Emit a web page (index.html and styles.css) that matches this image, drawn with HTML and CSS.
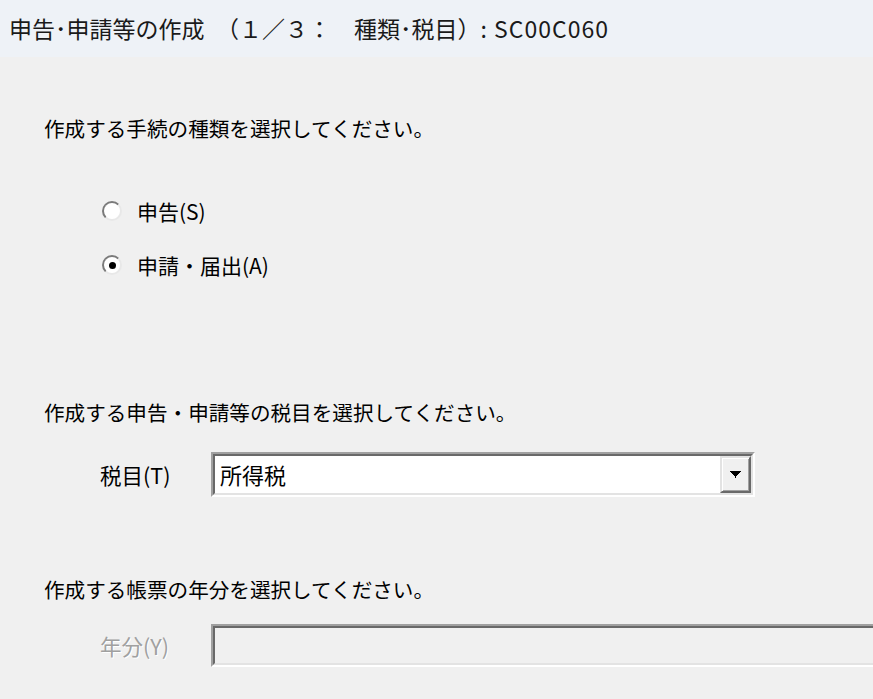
FILE: index.html
```html
<!DOCTYPE html>
<html lang="ja">
<head>
  <meta charset="UTF-8" />
  <title>申告・申請等の作成</title>
  <link rel="stylesheet" href="styles.css">
</head>
<body>

  <!-- Window title -->
  <div class="titlebar">申告･申請等の作成　（１／３：　種類･税目）<span class="screen-id">: SC00C060</span></div>

  <main class="content">

    <!-- Step 1: kind of procedure -->
    <p class="prompt">作成する手続の種類を選択してください。</p>
    <div class="radios">
      <label class="radio">
        <span class="radio-mark"></span>
        <span class="radio-text">申告(S)</span>
      </label>
      <label class="radio checked">
        <span class="radio-mark"></span>
        <span class="radio-text">申請・届出(A)</span>
      </label>
    </div>

    <!-- Step 2: tax item -->
    <p class="prompt prompt-tax">作成する申告・申請等の税目を選択してください。</p>
    <div class="field-row">
      <span class="field-label">税目(T)</span>
      <div class="combo">
        <div class="combo-inner">
          <span class="combo-value">所得税</span>
          <span class="combo-button">
            <svg width="11" height="7" viewBox="0 0 11 7" shape-rendering="crispEdges">
              <polygon points="0,0 11,0 5.5,6" fill="#000"/>
              <rect x="5" y="5" width="1" height="2" fill="#000"/>
            </svg>
          </span>
        </div>
      </div>
    </div>

    <!-- Step 3: year (disabled) -->
    <p class="prompt prompt-year">作成する帳票の年分を選択してください。</p>
    <div class="field-row field-row-year">
      <span class="field-label disabled">年分(Y)</span>
      <div class="combo combo-disabled">
        <div class="combo-inner"></div>
      </div>
    </div>

  </main>

</body>
</html>
```

FILE: styles.css
```css
* {
  margin: 0;
  padding: 0;
  box-sizing: border-box;
}

body {
  font-family: "Noto Sans CJK JP", "Noto Sans", sans-serif;
  background-color: #f0f0f0;
  color: #000;
  width: 873px;
  height: 699px;
  overflow: hidden;
}

.titlebar {
  height: 57px;
  line-height: 57px;
  padding-left: 9px;
  background-color: #eef2f7;
  font-size: 23px;
  color: #1a1a1a;
  white-space: nowrap;
}

.screen-id {
  letter-spacing: 1px;
}

.content {
  padding: 57px 0 0 44px;
}

.prompt {
  font-size: 20.6px;
  line-height: 28px;
  white-space: nowrap;
}

.prompt-tax {
  margin-top: 119px;
}

.prompt-year {
  margin-top: 78px;
}

/* Radio buttons */
.radios {
  margin: 55px 0 0 58px;
  display: flex;
  flex-direction: column;
  gap: 26px;
}

.radio {
  display: flex;
  align-items: center;
  height: 28px;
  font-size: 21px;
  gap: 15px;
}

.radio-mark {
  width: 20px;
  height: 20px;
  border-radius: 50%;
  border: 2px solid;
  border-color: #7a7a7a #e8e8e8 #e8e8e8 #7a7a7a;
  background-color: #fff;
  display: flex;
  justify-content: center;
  align-items: center;
}

.radio.checked .radio-mark::after {
  content: "";
  width: 7px;
  height: 7px;
  border-radius: 50%;
  background-color: #000;
}

/* Combo boxes */
.field-row {
  display: flex;
  align-items: center;
  margin: 26px 0 0 56px;
}

.field-row-year {
  margin-top: 21px;
}

.field-label {
  flex-shrink: 0;
  width: 111px;
  font-size: 21.5px;
  line-height: 28px;
}

.field-label.disabled {
  color: #a0a0a0;
  text-shadow: 1px 1px 0 #fff;
}

.combo {
  flex-shrink: 0;
  width: 544px;
  height: 45px;
  border: 2px solid;
  border-color: #a0a0a0 #fff #fff #a0a0a0;
}

.combo-inner {
  height: 100%;
  border: 2px solid;
  border-color: #696969 #e3e3e3 #e3e3e3 #696969;
  background-color: #fff;
  display: flex;
  align-items: stretch;
}

.combo-value {
  flex: 1;
  font-size: 22px;
  line-height: 37px;
  padding-left: 5px;
}

.combo-button {
  width: 31px;
  background-color: #f0f0f0;
  border: 2px solid;
  border-color: #e3e3e3 #696969 #696969 #e3e3e3;
  box-shadow: inset 1px 1px 0 #fff, inset -1px -1px 0 #a0a0a0;
  display: flex;
  justify-content: center;
  align-items: center;
}

/* disabled year box runs on past the window's right edge */
.combo-disabled {
  flex: 1;
  width: auto;
  height: 43px;
  border-right-width: 0;
}

.combo-disabled .combo-inner {
  background-color: #f0f0f0;
  border-right-width: 0;
}
```
